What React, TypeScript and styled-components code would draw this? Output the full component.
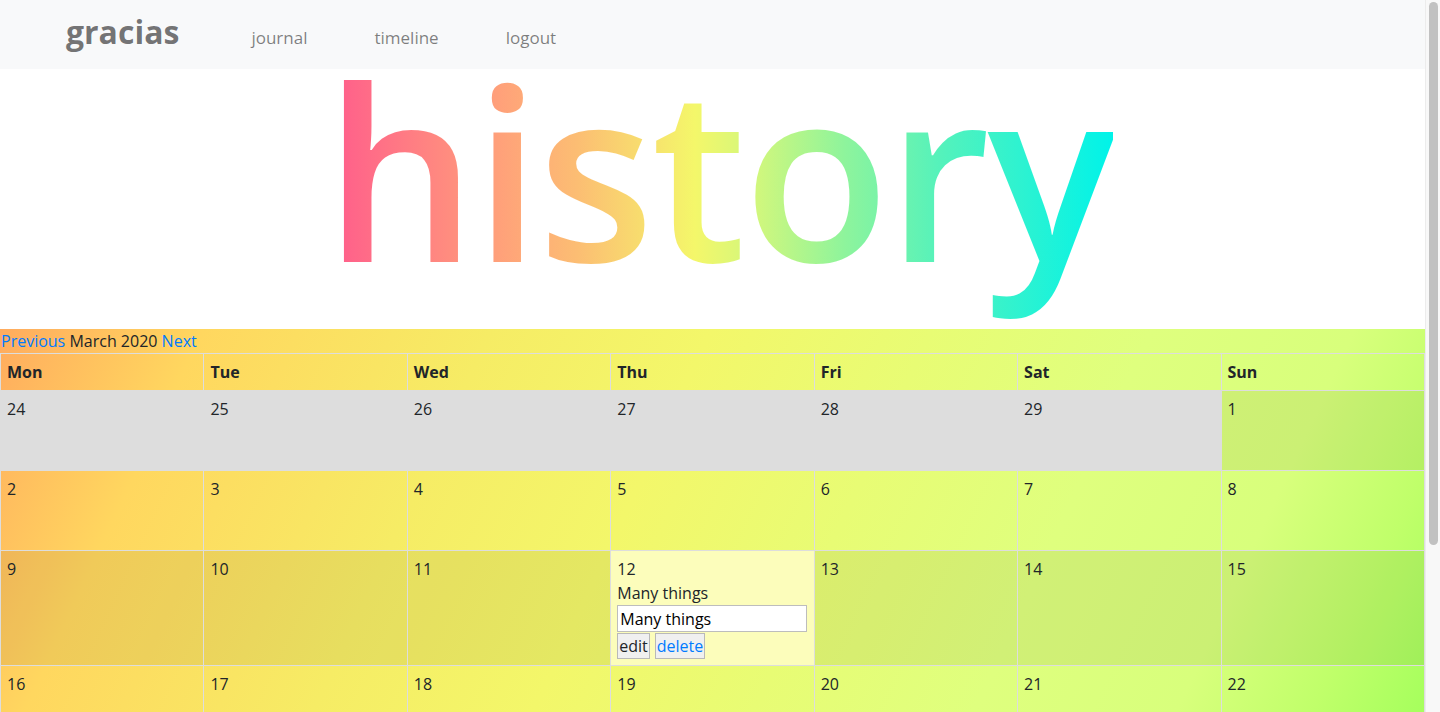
import React from "react";
import styled, { createGlobalStyle } from "styled-components";

const GlobalStyle = createGlobalStyle`
  html, body {
    margin: 0;
    padding: 0;
    background: #ffffff;
    overflow: hidden;
  }
  body {
    font-family: "Open Sans", "Liberation Sans", sans-serif;
    font-size: 16px;
    line-height: 1.5;
    color: #212529;
  }
  * { box-sizing: border-box; }
`;

const Window = styled.div`
  display: grid;
  grid-template-columns: 1fr 15px;
  height: 100vh;
`;

const ScrollArea = styled.div`
  overflow-y: auto;
  min-width: 0;
  &::-webkit-scrollbar { display: none; }
`;

const ScrollRail = styled.div`
  background: #f8f8f8;
  border-left: 1px solid #ececec;
  padding: 2px 2px 0 3px;
`;

const ScrollThumb = styled.div`
  height: 543px;
  border-radius: 5px;
  background: #c1c1c1;
`;

const Page = styled.div`
  padding-bottom: 27px;
`;

const NavBar = styled.nav`
  height: 69px;
  background: #f8f9fa;
  display: flex;
  align-items: baseline;
  padding: 16px 0 0 66px;
`;

const Brand = styled.a`
  font-size: 32px;
  line-height: 1;
  font-weight: 700;
  color: rgba(0, 0, 0, 0.55);
  text-decoration: none;
  margin-right: 72px;
`;

const NavLinks = styled.div`
  display: flex;
  align-items: baseline;
  gap: 67px;
`;

const NavLink = styled.a`
  font-size: 17px;
  line-height: 1.2;
  font-weight: 400;
  color: rgba(0, 0, 0, 0.5);
  text-decoration: none;
`;

const Hero = styled.h1`
  margin: 0;
  height: 260px;
  font-size: 240px;
  font-weight: 560;
  line-height: 200px;
  text-align: center;
  padding-left: 12px;
  letter-spacing: -3px;
`;

const GradientWord = styled.span`
  background: linear-gradient(
    to right,
    #ff5a8c 0%,
    #ffa07a 22%,
    #fcbd73 32%,
    #f4f76a 47%,
    #d0f77d 55%,
    #8ef49c 66%,
    #55f2bb 78%,
    #00f3e9 100%
  );
  -webkit-background-clip: text;
  background-clip: text;
  color: transparent;
`;

const Calendar = styled.section`
  background: linear-gradient(
    115deg,
    #ffab5e 0%,
    #ffd75f 12%,
    #f6ec65 29%,
    #f3f76a 42%,
    #e8fc74 55%,
    #dfff7e 68%,
    #d8ff7c 80%,
    #c0ff6a 88%,
    #a8ff5e 94%,
    #95ff55 100%
  );
`;

const MonthBar = styled.div`
  height: 24px;
  line-height: 24px;
  padding-left: 1px;
`;

const MonthLink = styled.a`
  color: #007bff;
  text-decoration: none;
  cursor: pointer;
`;

const Grid = styled.table`
  width: 100%;
  border-collapse: collapse;
`;

const HeadCell = styled.th`
  width: 14.28%;
  text-align: left;
  font-weight: 700;
  padding: 6px;
  border: 1px solid #dddddd;
  line-height: 24px;
`;

const DayCell = styled.td<{ $tone?: "out" | "shade" | "active" }>`
  vertical-align: top;
  height: 80px;
  padding: 6px;
  border: 1px solid #dddddd;
  line-height: 24px;
  background: ${(p) =>
    p.$tone === "out"
      ? "#dddddd"
      : p.$tone === "shade"
      ? "rgba(0, 0, 0, 0.06)"
      : p.$tone === "active"
      ? "#fcfdbb"
      : "transparent"};
`;

const DayNum = styled.div``;

const EntryText = styled.div``;

const EntryInput = styled.input`
  display: block;
  width: 190px;
  height: 27px;
  font-family: inherit;
  font-size: 16px;
  color: #000;
  background: #fff;
  border: 1px solid #bdbdbd;
  padding: 0 2px;
  margin: 0;
`;

const Actions = styled.div`
  display: flex;
  gap: 5px;
  margin-top: 1px;
`;

const ActionButton = styled.button<{ $link?: boolean }>`
  font-family: inherit;
  font-size: 16px;
  line-height: 23px;
  height: 26px;
  padding: 0 1px;
  background: #f0f0f0;
  border: 1px solid #b9b9b9;
  color: ${(p) => (p.$link ? "#007bff" : "#212529")};
  cursor: pointer;
`;

type Day = { n: number; tone?: "out" | "shade" | "active"; entry?: string };

const weeks: Day[][] = [
  [
    { n: 24, tone: "out" },
    { n: 25, tone: "out" },
    { n: 26, tone: "out" },
    { n: 27, tone: "out" },
    { n: 28, tone: "out" },
    { n: 29, tone: "out" },
    { n: 1, tone: "shade" },
  ],
  [2, 3, 4, 5, 6, 7, 8].map((n) => ({ n })),
  [
    { n: 9, tone: "shade" },
    { n: 10, tone: "shade" },
    { n: 11, tone: "shade" },
    { n: 12, tone: "active", entry: "Many things" },
    { n: 13, tone: "shade" },
    { n: 14, tone: "shade" },
    { n: 15, tone: "shade" },
  ],
  [16, 17, 18, 19, 20, 21, 22].map((n) => ({ n })),
  [23, 24, 25, 26, 27, 28, 29].map((n) => ({ n })),
  [
    { n: 30 },
    { n: 31 },
    { n: 1, tone: "out" },
    { n: 2, tone: "out" },
    { n: 3, tone: "out" },
    { n: 4, tone: "out" },
    { n: 5, tone: "out" },
  ],
];

const dayNames = ["Mon", "Tue", "Wed", "Thu", "Fri", "Sat", "Sun"];

export default function App() {
  return (
    <Window>
      <GlobalStyle />
      <ScrollArea>
        <Page>
          <NavBar>
            <Brand href="#">gracias</Brand>
            <NavLinks>
              <NavLink href="#">journal</NavLink>
              <NavLink href="#">timeline</NavLink>
              <NavLink href="#">logout</NavLink>
            </NavLinks>
          </NavBar>
          <Hero>
            <GradientWord>history</GradientWord>
          </Hero>
          <Calendar>
            <MonthBar>
              <MonthLink>Previous</MonthLink> March 2020 <MonthLink>Next</MonthLink>
            </MonthBar>
            <Grid>
              <thead>
                <tr>
                  {dayNames.map((d) => (
                    <HeadCell key={d}>{d}</HeadCell>
                  ))}
                </tr>
              </thead>
              <tbody>
                {weeks.map((w, i) => (
                  <tr key={i}>
                    {w.map((d, j) => (
                      <DayCell key={j} $tone={d.tone}>
                        <DayNum>{d.n}</DayNum>
                        {d.entry && (
                          <>
                            <EntryText>{d.entry}</EntryText>
                            <EntryInput defaultValue={d.entry} />
                            <Actions>
                              <ActionButton>edit</ActionButton>
                              <ActionButton $link>delete</ActionButton>
                            </Actions>
                          </>
                        )}
                      </DayCell>
                    ))}
                  </tr>
                ))}
              </tbody>
            </Grid>
          </Calendar>
        </Page>
      </ScrollArea>
      <ScrollRail>
        <ScrollThumb />
      </ScrollRail>
    </Window>
  );
}
